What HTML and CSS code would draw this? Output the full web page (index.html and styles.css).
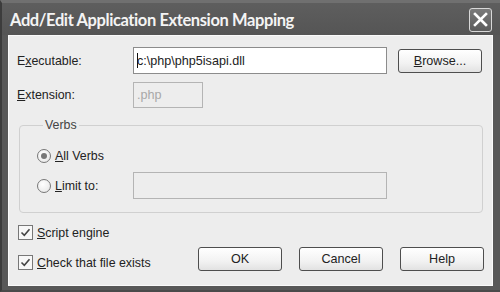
FILE: index.html
```html
<!DOCTYPE html>
<html lang="en">
<head>
    <meta charset="UTF-8">
    <title>Add/Edit Application Extension Mapping</title>
    <link rel="stylesheet" href="styles.css">
</head>
<body>
    <div class="window">
        <!-- Title bar -->
        <div class="titlebar">
            <span class="title">Add/Edit Application Extension Mapping</span>
            <div class="close-btn">
                <svg width="15" height="15" viewBox="0 0 15 15">
                    <path d="M2 2 L13 13 M13 2 L2 13" stroke="#fff" stroke-width="2.6" stroke-linecap="square"/>
                </svg>
            </div>
        </div>

        <div class="content">
            <!-- Executable row -->
            <div class="row row-exe">
                <span class="label">E<u>x</u>ecutable:</span>
                <div class="field field-exe"><span class="caret"></span>c:\php\php5isapi.dll</div>
                <div class="btn btn-browse"><u>B</u>rowse...</div>
            </div>

            <!-- Extension row -->
            <div class="row row-ext">
                <span class="label"><u>E</u>xtension:</span>
                <div class="field field-ext disabled">.php</div>
            </div>

            <!-- Verbs group -->
            <fieldset class="group">
                <legend>Verbs</legend>
                <div class="radio-row">
                    <span class="radio checked"></span>
                    <span><u>A</u>ll Verbs</span>
                </div>
                <div class="radio-row radio-limit">
                    <span class="radio"></span>
                    <span class="radio-text"><u>L</u>imit to:</span>
                    <div class="field field-limit disabled"></div>
                </div>
            </fieldset>

            <!-- Bottom area -->
            <div class="bottom">
                <div class="checks">
                    <div class="check-row">
                        <span class="checkbox"><svg width="11" height="11" viewBox="0 0 11 11"><path d="M1.5 5.5 L4.3 8.3 L9.5 2.2" fill="none" stroke="#444" stroke-width="1.6"/></svg></span>
                        <span><u>S</u>cript engine</span>
                    </div>
                    <div class="check-row">
                        <span class="checkbox"><svg width="11" height="11" viewBox="0 0 11 11"><path d="M1.5 5.5 L4.3 8.3 L9.5 2.2" fill="none" stroke="#444" stroke-width="1.6"/></svg></span>
                        <span><u>C</u>heck that file exists</span>
                    </div>
                </div>
                <div class="button-group">
                    <div class="btn">OK</div>
                    <div class="btn">Cancel</div>
                    <div class="btn">Help</div>
                </div>
            </div>
        </div>
    </div>
</body>
</html>
```

FILE: styles.css
```css
/* Windows XP style dialog, greyscale */
body {
    margin: 0;
    font-family: "Liberation Sans", Arial, sans-serif;
    font-size: 12.4px;
    color: #222;
    background: #3a3a3a;
}
u {
    text-decoration: underline;
    text-underline-offset: 1px;
}

.window {
    width: 500px;
    height: 292px;
    box-sizing: border-box;
    display: flex;
    flex-direction: column;
    background: #585858;
    border-top: 3px solid #707070;
    border-left: 2px solid #3c3c3c;
    border-bottom: 2px solid #4a4a4a;
}

/* Title bar */
.titlebar {
    height: 32px;
    display: flex;
    align-items: center;
    justify-content: space-between;
    padding: 0 8px 0 8px;
    background: linear-gradient(#5e5e5e, #555555);
}
.title {
    font-family: "Lato", "Liberation Sans", sans-serif;
    font-weight: bold;
    font-size: 16.5px;
    letter-spacing: -0.4px;
    color: #f4f4f4;
    margin-top: 1px;
}
.close-btn {
    width: 21px;
    height: 22px;
    border: 1px solid #d8d8d8;
    border-radius: 3px;
    background: linear-gradient(#7a7a7a, #5c5c5c);
    display: flex;
    align-items: center;
    justify-content: center;
    margin-top: 1px;
}

.content {
    flex: 1;
    margin: 0 7px 4px 6px;
    background: #ededed;
    border: 1px solid #fafafa;
    padding: 11px 0 0 8px;
}

/* Rows */
.row {
    display: flex;
    align-items: center;
}
.label {
    width: 116px;
    flex-shrink: 0;
}
.row-exe {
    height: 27px;
}
.row-ext {
    height: 26px;
    margin-top: 8px;
}

.field {
    box-sizing: border-box;
    background: #fff;
    border: 1px solid #8c8c8c;
    height: 100%;
    display: flex;
    align-items: center;
    padding-left: 3px;
    font-size: 12.6px;
}
.field-exe {
    width: 254px;
}
.caret {
    display: inline-block;
    width: 1px;
    height: 15px;
    background: #111;
    margin-right: -1px;
}
.field-ext {
    width: 70px;
}
.field.disabled {
    background: #ededed;
    border-color: #b4b4b4;
    color: #a8a8a8;
}

/* Buttons */
.btn {
    box-sizing: border-box;
    width: 84px;
    height: 24px;
    border: 1px solid #4e4e4e;
    border-radius: 3px;
    background: linear-gradient(#ffffff, #f2f2f2 60%, #e2e2e2);
    display: flex;
    align-items: center;
    justify-content: center;
    font-size: 12.6px;
}
.btn-browse {
    margin-left: 11px;
}

/* Group box */
.group {
    margin: 10px 0 0 2px;
    width: 464px;
    height: 95px;
    box-sizing: border-box;
    border: 1px solid #d0d0d0;
    border-radius: 4px;
    padding: 16px 0 0 17px;
}
.group legend {
    padding: 0 2px;
    margin-left: 6px;
    color: #444;
}
.radio-row {
    display: flex;
    align-items: center;
    height: 16px;
}
.radio-limit {
    margin-top: 8px;
    height: 27px;
}
.radio {
    box-sizing: border-box;
    width: 14px;
    height: 14px;
    border-radius: 50%;
    border: 1px solid #777;
    background: radial-gradient(circle at 40% 35%, #fff, #e4e4e4);
    margin-right: 4px;
    display: flex;
    align-items: center;
    justify-content: center;
}
.radio.checked::after {
    content: "";
    width: 6px;
    height: 6px;
    border-radius: 50%;
    background: #777;
}
.radio-text {
    width: 78px;
}
.field-limit {
    width: 254px;
}

/* Bottom */
.bottom {
    display: flex;
    justify-content: space-between;
    margin-top: 12px;
    padding-right: 8px;
}
.checks {
    display: flex;
    flex-direction: column;
    gap: 15px;
    margin-left: 1px;
}
.check-row {
    display: flex;
    align-items: center;
    height: 15px;
}
.checkbox {
    box-sizing: border-box;
    width: 15px;
    height: 15px;
    border: 1px solid #777;
    background: #f7f7f7;
    margin-right: 4px;
    display: flex;
    align-items: center;
    justify-content: center;
}
.button-group {
    display: flex;
    gap: 17px;
    margin-top: 22px;
}
```
